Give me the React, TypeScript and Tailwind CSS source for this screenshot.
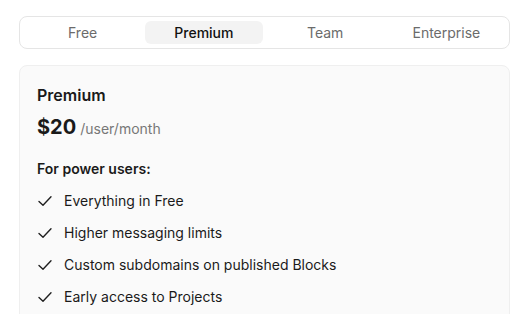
const tabs = ["Free", "Premium", "Team", "Enterprise"];

const features = [
  "Everything in Free",
  "Higher messaging limits",
  "Custom subdomains on published Blocks",
  "Early access to Projects",
];

function Check() {
  return (
    <svg width="16" height="16" viewBox="0 0 16 16" fill="none" className="shrink-0">
      <path d="M2 8.5 L6 12.2 L14 3.8" stroke="#1f1f1f" strokeWidth="1.4" strokeLinecap="round" strokeLinejoin="round" />
    </svg>
  );
}

export default function App() {
  return (
    <div className="h-[314px] overflow-hidden bg-white px-[19px] pt-4 font-['Inter',sans-serif] text-[#1a1a1a]">
      <div className="grid grid-cols-4 gap-1 rounded-lg border border-[#e5e5e5] p-1">
        {tabs.map((t) => (
          <div
            key={t}
            className={
              t === "Premium"
                ? "flex h-[23px] items-center justify-center rounded-md bg-[#f3f3f3] text-sm font-medium text-[#111]"
                : "flex h-[23px] items-center justify-center text-sm text-[#6b6b6b]"
            }
          >
            {t}
          </div>
        ))}
      </div>

      <div className="mt-4 rounded-lg border border-[#efefef] bg-[#fafafa] px-[17px] pt-[17px] pb-6">
        <h2 className="text-base leading-6 font-semibold">Premium</h2>
        <div className="mt-1.5 flex items-baseline gap-1">
          <span className="text-xl font-bold leading-7">$20</span>
          <span className="text-sm text-[#777]">/user/month</span>
        </div>
        <p className="mt-[18px] text-sm font-semibold">For power users:</p>
        <ul className="mt-3 flex flex-col gap-3">
          {features.map((f) => (
            <li key={f} className="flex items-center gap-[11px] text-sm leading-5">
              <Check />
              {f}
            </li>
          ))}
        </ul>
      </div>
    </div>
  );
}
